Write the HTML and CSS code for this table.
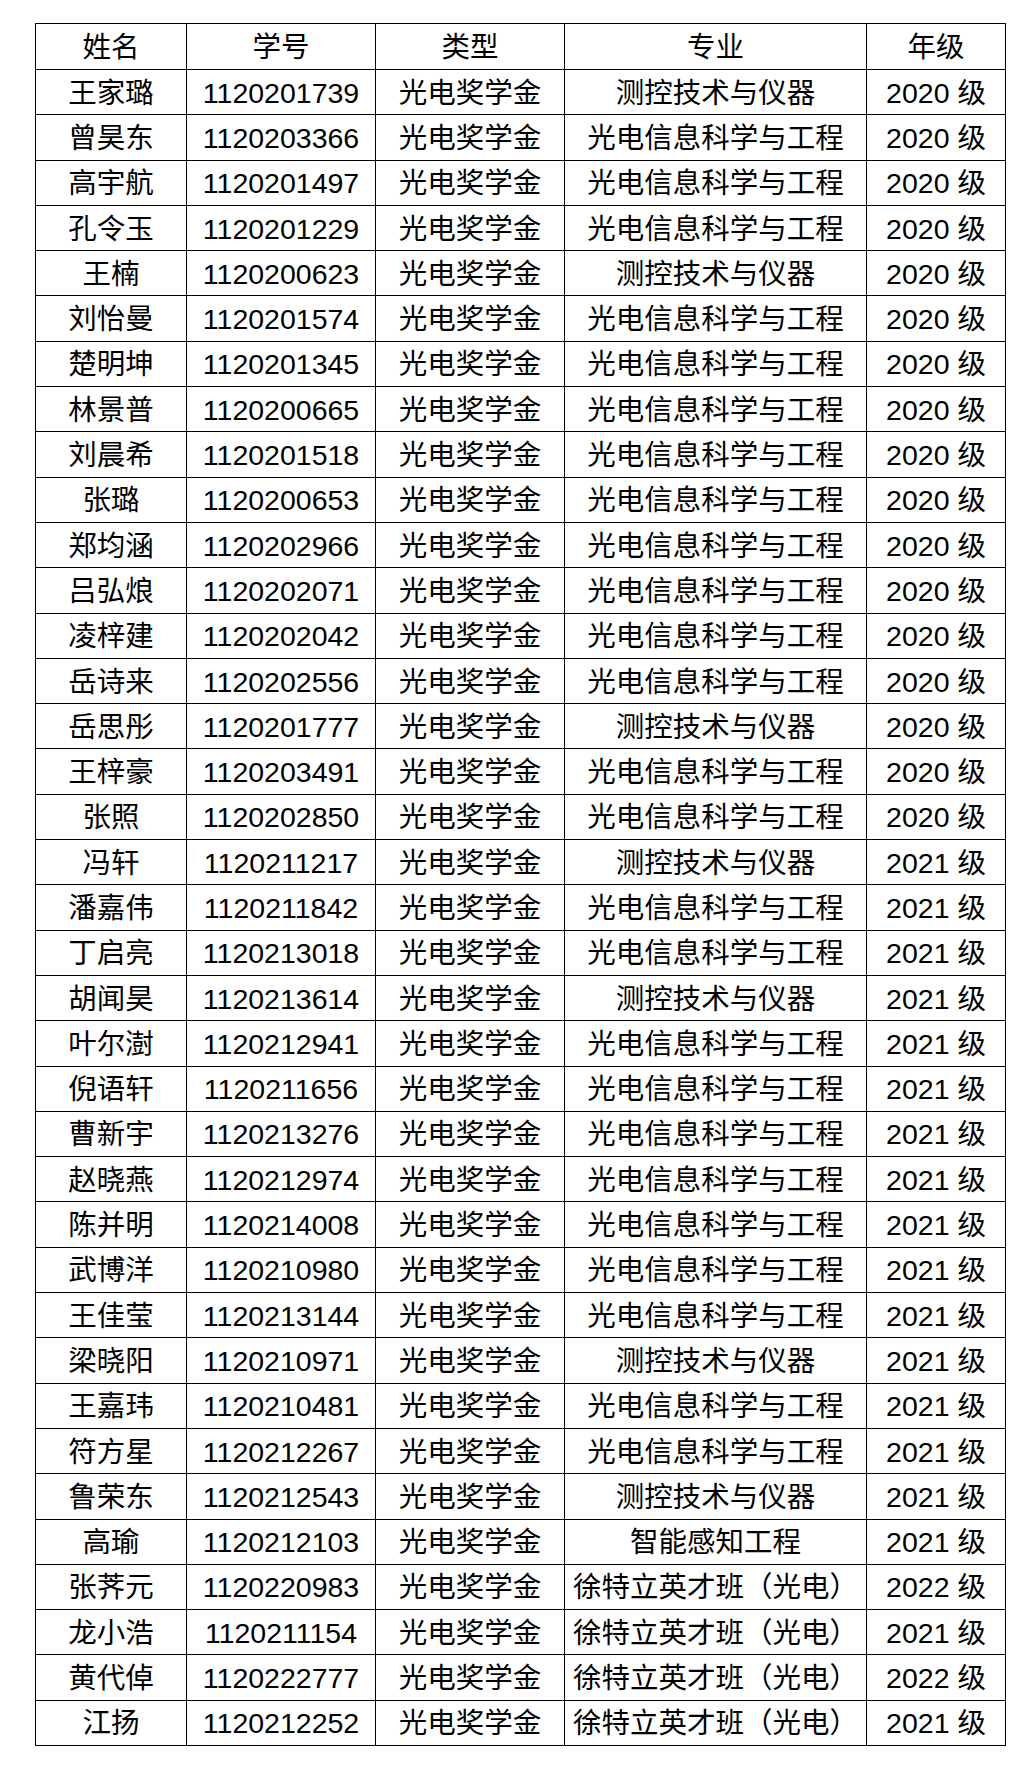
FILE: index.html
```html
<!DOCTYPE html>
<html lang="zh-CN">
<head>
<meta charset="utf-8">
<title>光电奖学金名单</title>
<link rel="stylesheet" href="styles.css">
</head>
<body>
<table class="roster">
  <colgroup>
    <col class="c-name"><col class="c-id"><col class="c-type"><col class="c-major"><col class="c-grade">
  </colgroup>
  <thead>
    <tr><th>姓名</th><th>学号</th><th>类型</th><th>专业</th><th>年级</th></tr>
  </thead>
  <tbody>
    <tr><td>王家璐</td><td>1120201739</td><td>光电奖学金</td><td>测控技术与仪器</td><td>2020 级</td></tr>
    <tr><td>曾昊东</td><td>1120203366</td><td>光电奖学金</td><td>光电信息科学与工程</td><td>2020 级</td></tr>
    <tr><td>高宇航</td><td>1120201497</td><td>光电奖学金</td><td>光电信息科学与工程</td><td>2020 级</td></tr>
    <tr><td>孔令玉</td><td>1120201229</td><td>光电奖学金</td><td>光电信息科学与工程</td><td>2020 级</td></tr>
    <tr><td>王楠</td><td>1120200623</td><td>光电奖学金</td><td>测控技术与仪器</td><td>2020 级</td></tr>
    <tr><td>刘怡曼</td><td>1120201574</td><td>光电奖学金</td><td>光电信息科学与工程</td><td>2020 级</td></tr>
    <tr><td>楚明坤</td><td>1120201345</td><td>光电奖学金</td><td>光电信息科学与工程</td><td>2020 级</td></tr>
    <tr><td>林景普</td><td>1120200665</td><td>光电奖学金</td><td>光电信息科学与工程</td><td>2020 级</td></tr>
    <tr><td>刘晨希</td><td>1120201518</td><td>光电奖学金</td><td>光电信息科学与工程</td><td>2020 级</td></tr>
    <tr><td>张璐</td><td>1120200653</td><td>光电奖学金</td><td>光电信息科学与工程</td><td>2020 级</td></tr>
    <tr><td>郑均涵</td><td>1120202966</td><td>光电奖学金</td><td>光电信息科学与工程</td><td>2020 级</td></tr>
    <tr><td>吕弘烺</td><td>1120202071</td><td>光电奖学金</td><td>光电信息科学与工程</td><td>2020 级</td></tr>
    <tr><td>凌梓建</td><td>1120202042</td><td>光电奖学金</td><td>光电信息科学与工程</td><td>2020 级</td></tr>
    <tr><td>岳诗来</td><td>1120202556</td><td>光电奖学金</td><td>光电信息科学与工程</td><td>2020 级</td></tr>
    <tr><td>岳思彤</td><td>1120201777</td><td>光电奖学金</td><td>测控技术与仪器</td><td>2020 级</td></tr>
    <tr><td>王梓豪</td><td>1120203491</td><td>光电奖学金</td><td>光电信息科学与工程</td><td>2020 级</td></tr>
    <tr><td>张照</td><td>1120202850</td><td>光电奖学金</td><td>光电信息科学与工程</td><td>2020 级</td></tr>
    <tr><td>冯轩</td><td>1120211217</td><td>光电奖学金</td><td>测控技术与仪器</td><td>2021 级</td></tr>
    <tr><td>潘嘉伟</td><td>1120211842</td><td>光电奖学金</td><td>光电信息科学与工程</td><td>2021 级</td></tr>
    <tr><td>丁启亮</td><td>1120213018</td><td>光电奖学金</td><td>光电信息科学与工程</td><td>2021 级</td></tr>
    <tr><td>胡闻昊</td><td>1120213614</td><td>光电奖学金</td><td>测控技术与仪器</td><td>2021 级</td></tr>
    <tr><td>叶尔澍</td><td>1120212941</td><td>光电奖学金</td><td>光电信息科学与工程</td><td>2021 级</td></tr>
    <tr><td>倪语轩</td><td>1120211656</td><td>光电奖学金</td><td>光电信息科学与工程</td><td>2021 级</td></tr>
    <tr><td>曹新宇</td><td>1120213276</td><td>光电奖学金</td><td>光电信息科学与工程</td><td>2021 级</td></tr>
    <tr><td>赵晓燕</td><td>1120212974</td><td>光电奖学金</td><td>光电信息科学与工程</td><td>2021 级</td></tr>
    <tr><td>陈并明</td><td>1120214008</td><td>光电奖学金</td><td>光电信息科学与工程</td><td>2021 级</td></tr>
    <tr><td>武博洋</td><td>1120210980</td><td>光电奖学金</td><td>光电信息科学与工程</td><td>2021 级</td></tr>
    <tr><td>王佳莹</td><td>1120213144</td><td>光电奖学金</td><td>光电信息科学与工程</td><td>2021 级</td></tr>
    <tr><td>梁晓阳</td><td>1120210971</td><td>光电奖学金</td><td>测控技术与仪器</td><td>2021 级</td></tr>
    <tr><td>王嘉玮</td><td>1120210481</td><td>光电奖学金</td><td>光电信息科学与工程</td><td>2021 级</td></tr>
    <tr><td>符方星</td><td>1120212267</td><td>光电奖学金</td><td>光电信息科学与工程</td><td>2021 级</td></tr>
    <tr><td>鲁荣东</td><td>1120212543</td><td>光电奖学金</td><td>测控技术与仪器</td><td>2021 级</td></tr>
    <tr><td>高瑜</td><td>1120212103</td><td>光电奖学金</td><td>智能感知工程</td><td>2021 级</td></tr>
    <tr><td>张荠元</td><td>1120220983</td><td>光电奖学金</td><td>徐特立英才班（光电）</td><td>2022 级</td></tr>
    <tr><td>龙小浩</td><td>1120211154</td><td>光电奖学金</td><td>徐特立英才班（光电）</td><td>2021 级</td></tr>
    <tr><td>黄代倬</td><td>1120222777</td><td>光电奖学金</td><td>徐特立英才班（光电）</td><td>2022 级</td></tr>
    <tr><td>江扬</td><td>1120212252</td><td>光电奖学金</td><td>徐特立英才班（光电）</td><td>2021 级</td></tr>
  </tbody>
</table>
</body>
</html>
```

FILE: styles.css
```css
html, body {
  margin: 0;
  padding: 0;
  background: #ffffff;
}

body {
  padding: 23px 0 0 35px;
  font-family: "Liberation Sans", "Noto Sans CJK SC", sans-serif;
  color: #000000;
}

.roster {
  border-collapse: collapse;
  table-layout: fixed;
  width: 970px;
  font-size: 28.5px;
}

.c-name { width: 151px; }
.c-id { width: 189px; }
.c-type { width: 189px; }
.c-major { width: 302px; }
.c-grade { width: 139px; }

.roster th,
.roster td {
  border: 1px solid #000000;
  padding: 1px 0 0 0;
  text-align: center;
  vertical-align: middle;
  font-weight: normal;
  line-height: 30px;
  white-space: nowrap;
}

.roster thead tr {
  height: 46px;
}

.roster tbody tr {
  height: 45.3px;
}
```
